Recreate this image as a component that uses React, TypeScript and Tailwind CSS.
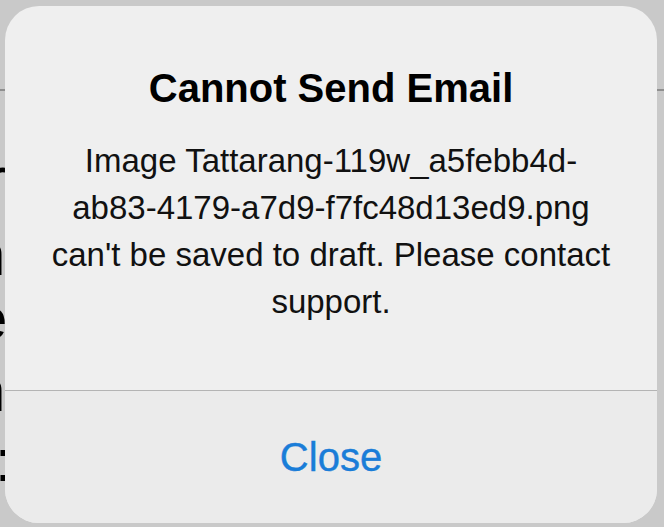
export default function App() {
  return (
    <div className="relative h-[527px] w-[664px] overflow-hidden bg-[#c9c9c9] font-['Liberation_Sans',Arial,sans-serif]">
      {/* page behind the alert, mostly hidden */}
      <div className="pt-[89px]">
        <div className="h-[2px] bg-[#8f8f8f]" />
        <div className="pt-[50px] text-[60px] leading-[76px] text-black">
          <div className="-ml-[14px]">r</div>
          <div className="-ml-[28px]">n</div>
          <div className="-ml-[26px] -mt-[12px]">e</div>
          <div className="-ml-[28px] -mt-[4px]">n</div>
          <div className="-ml-[5px] -mt-[6px]">:</div>
        </div>
      </div>

      {/* alert */}
      <div className="absolute left-[5px] top-[6px] flex h-[517px] w-[652px] flex-col overflow-hidden rounded-[34px] bg-[#efefef] text-center">
        <div className="h-[384px] pt-[58px]">
          <h1 className="text-[40px] font-bold leading-[48px] text-black">Cannot Send Email</h1>
          <p className="mt-[25px] text-[33px] leading-[47px] text-[#111]">
            Image Tattarang-119w_a5febb4d-
            <br />
            ab83-4179-a7d9-f7fc48d13ed9.png
            <br />
            can't be saved to draft. Please contact
            <br />
            support.
          </p>
        </div>
        <div className="h-px bg-[#b4b4b4]" />
        <button className="flex flex-1 items-center justify-center bg-[#ebebeb] text-[40px] text-[#1a7dd8] [-webkit-text-stroke:0.4px_#1a7dd8]">
          Close
        </button>
      </div>
    </div>
  );
}
